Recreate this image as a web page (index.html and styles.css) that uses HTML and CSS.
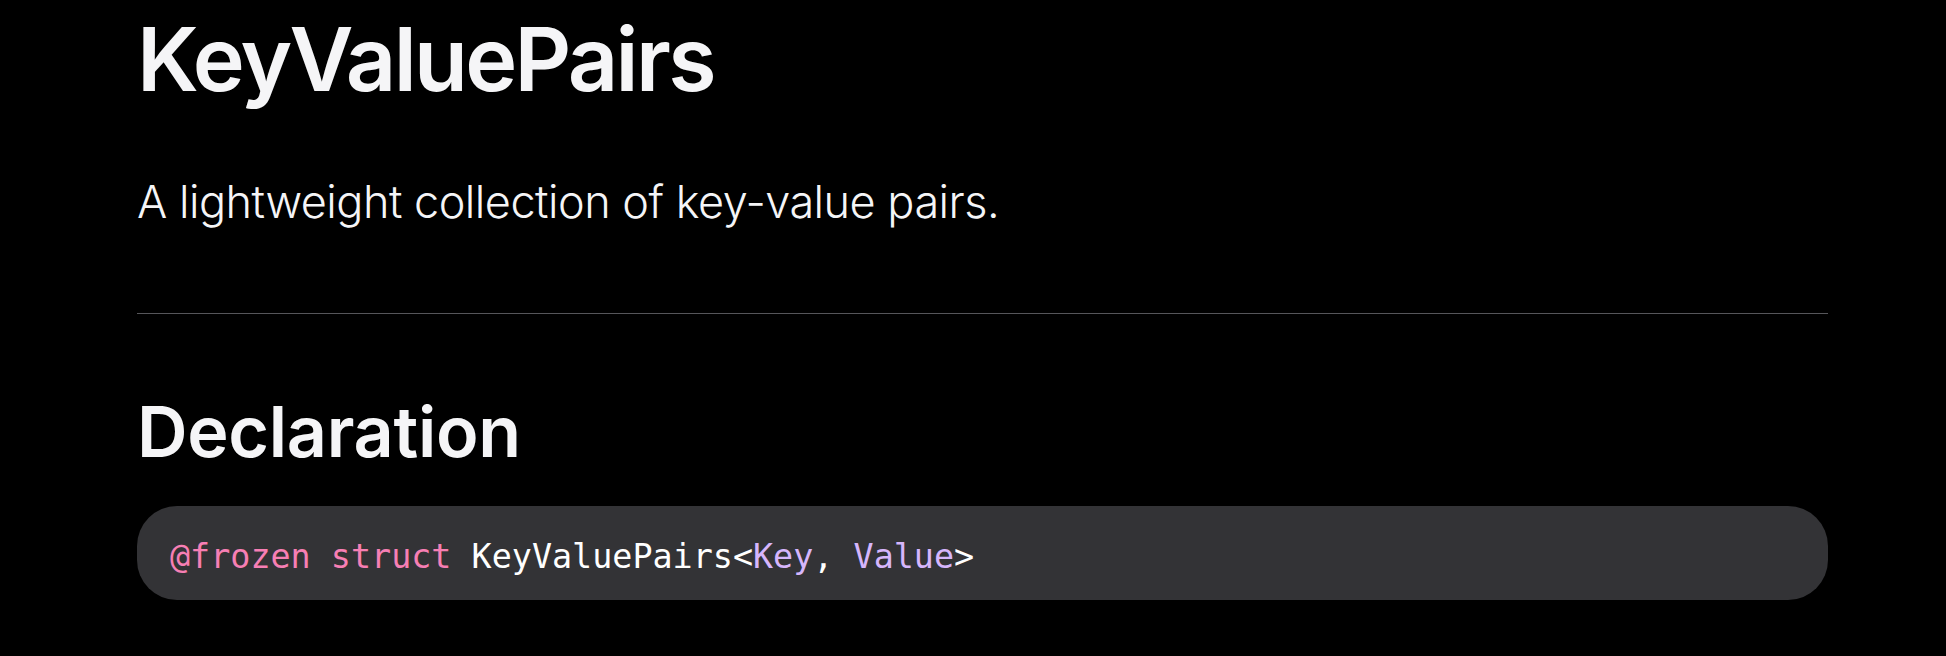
FILE: index.html
```html
<!DOCTYPE html>
<html lang="en">
<head>
<meta charset="utf-8">
<title>KeyValuePairs</title>
<link rel="stylesheet" href="styles.css">
</head>
<body>
<main class="page">
  <h1 class="title">KeyValuePairs</h1>
  <p class="abstract">A lightweight collection of key-value pairs.</p>
  <hr class="divider">
  <h2 class="section-title">Declaration</h2>
  <pre class="declaration"><code><span class="kw">@frozen</span> <span class="kw">struct</span> KeyValuePairs&lt;<span class="type">Key</span>, <span class="type">Value</span>&gt;</code></pre>
</main>
</body>
</html>
```
FILE: styles.css
```css
html, body {
  margin: 0;
  padding: 0;
  background: #000;
}

body {
  font-family: Inter, "Noto Sans", "Liberation Sans", sans-serif;
  color: #f5f5f7;
}

.page {
  padding: 15px 118px 0 137px;
}

.title {
  margin: 0;
  font-size: 88px;
  line-height: 88px;
  font-weight: 600;
  letter-spacing: -2.7px;
}

.abstract {
  margin: 76px 0 0;
  font-size: 45px;
  line-height: 45px;
  font-weight: 300;
  letter-spacing: -0.5px;
}

.divider {
  margin: 89px 0 0;
  border: 0;
  height: 1px;
  background: #56565a;
}

.section-title {
  margin: 83px 0 0;
  font-size: 70px;
  line-height: 70px;
  font-weight: 600;
  letter-spacing: -0.3px;
}

.declaration {
  margin: 39px 0 0;
  padding: 26px 33px 16px;
  background: #333336;
  border-radius: 40px;
  font-family: "Liberation Mono", "DejaVu Sans Mono", monospace;
  font-size: 33.4px;
  line-height: 50px;
  color: #ffffff;
}

.declaration .kw {
  color: #f77fb4;
}

.declaration .type {
  color: #d6b6fc;
}
```
